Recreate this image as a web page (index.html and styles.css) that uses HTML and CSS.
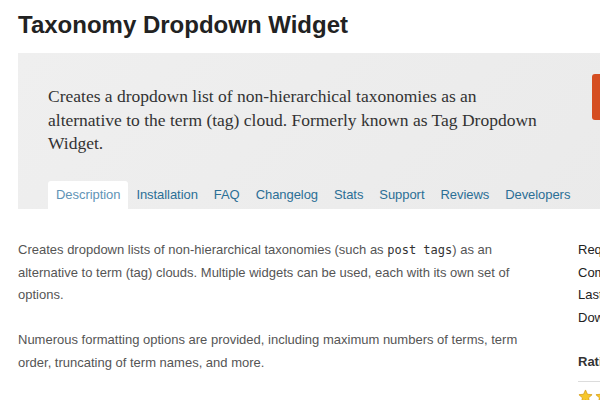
FILE: index.html
```html
<!DOCTYPE html>
<html>
<head>
<meta charset="utf-8">
<link rel="stylesheet" href="styles.css">
</head>
<body>
<div class="page">
  <h1 class="title">Taxonomy Dropdown Widget</h1>
  <div class="plugin-head">
    <div class="head-row">
      <p class="summary">Creates a dropdown list of non-hierarchical taxonomies as an alternative to the term (tag) cloud. Formerly known as Tag Dropdown Widget.</p>
      <a class="download">Download Version 2.3</a>
    </div>
    <ul class="tabs">
      <li class="tab active">Description</li>
      <li class="tab">Installation</li>
      <li class="tab">FAQ</li>
      <li class="tab">Changelog</li>
      <li class="tab">Stats</li>
      <li class="tab">Support</li>
      <li class="tab">Reviews</li>
      <li class="tab">Developers</li>
    </ul>
  </div>
  <div class="main">
    <div class="content">
      <p>Creates dropdown lists of non-hierarchical taxonomies (such as <code>post tags</code>) as an alternative to term (tag) clouds. Multiple widgets can be used, each with its own set of options.</p>
      <p>Numerous formatting options are provided, including maximum numbers of terms, term order, truncating of term names, and more.</p>
    </div>
    <div class="sidebar">
      <ul class="meta">
        <li>Requires: 3.0 or higher</li>
        <li>Compatible up to: 3.5.2</li>
        <li>Last Updated: 2013-3-26</li>
        <li>Downloads: 41,231</li>
      </ul>
      <h4 class="ratings">Ratings</h4>
      <div class="stars">
        <svg width="15" height="15" viewBox="0 0 24 24"><path d="M12 1.5l3.1 6.9 7.4.7-5.6 5 1.7 7.4L12 17.6l-6.6 3.9 1.7-7.4-5.6-5 7.4-.7z" fill="#f7c72a" stroke="#d49a12" stroke-width="1.2"/></svg>
        <svg width="15" height="15" viewBox="0 0 24 24"><path d="M12 1.5l3.1 6.9 7.4.7-5.6 5 1.7 7.4L12 17.6l-6.6 3.9 1.7-7.4-5.6-5 7.4-.7z" fill="#f7c72a" stroke="#d49a12" stroke-width="1.2"/></svg>
      </div>
    </div>
  </div>
</div>
</body>
</html>
```

FILE: styles.css
```css
html, body {
  margin: 0;
  padding: 0;
  background: #fff;
  overflow: hidden;
}
.page {
  width: 800px;
  padding-left: 18px;
}
.title {
  margin: 10px 0 13px;
  font-family: "Liberation Sans", Arial, sans-serif;
  font-size: 24px;
  line-height: 30px;
  font-weight: bold;
  color: #222;
}
.plugin-head {
  background: linear-gradient(135deg, #efefef 0%, #e9e9e9 100%);
  height: 156px;
  padding-left: 30px;
  box-sizing: border-box;
  display: flex;
  flex-direction: column;
}
.head-row {
  display: flex;
  align-items: flex-start;
}
.summary {
  width: 500px;
  margin: 32px 0 0;
  font-family: "Liberation Serif", "Times New Roman", serif;
  font-size: 17.5px;
  line-height: 23.5px;
  color: #333;
}
.download {
  margin: 21px 0 0 44px;
  height: 46px;
  padding: 0 20px 0 30px;
  background: #d54e21;
  border-radius: 3px;
  color: #fff;
  font-family: "Liberation Sans", Arial, sans-serif;
  font-size: 16px;
  line-height: 46px;
  white-space: nowrap;
}
.tabs {
  list-style: none;
  margin: auto 0 0;
  padding: 0;
  display: flex;
}
.tab {
  padding: 0 8px;
  height: 28px;
  line-height: 28px;
  font-family: "Liberation Sans", Arial, sans-serif;
  font-size: 13px;
  letter-spacing: -0.06px;
  color: #2b6f96;
}
.tab.active {
  background: #fff;
  color: #5f94b6;
  border-radius: 3px 3px 0 0;
}
.main {
  display: flex;
  margin-top: 30px;
}
.content {
  width: 505px;
  margin-right: 55px;
  font-family: "Liberation Sans", Arial, sans-serif;
  font-size: 13px;
  line-height: 22.5px;
  color: #555;
}
.content p {
  margin: 0 0 22.5px;
}
.content code {
  font-family: "DejaVu Sans Mono", "Liberation Mono", monospace;
  font-size: 12px;
  color: #333;
}
.sidebar {
  width: 200px;
  font-family: "Liberation Sans", Arial, sans-serif;
  font-size: 13px;
  color: #222;
}
.meta {
  list-style: none;
  margin: 0;
  padding: 0;
  line-height: 22.7px;
}
.ratings {
  margin: 22px 0 0;
  padding-bottom: 9px;
  border-bottom: 1px solid #dcdcdc;
  font-size: 13px;
  line-height: 20px;
  font-weight: bold;
  color: #333;
}
.stars {
  display: flex;
  gap: 2px;
  margin-top: 7px;
}
```
